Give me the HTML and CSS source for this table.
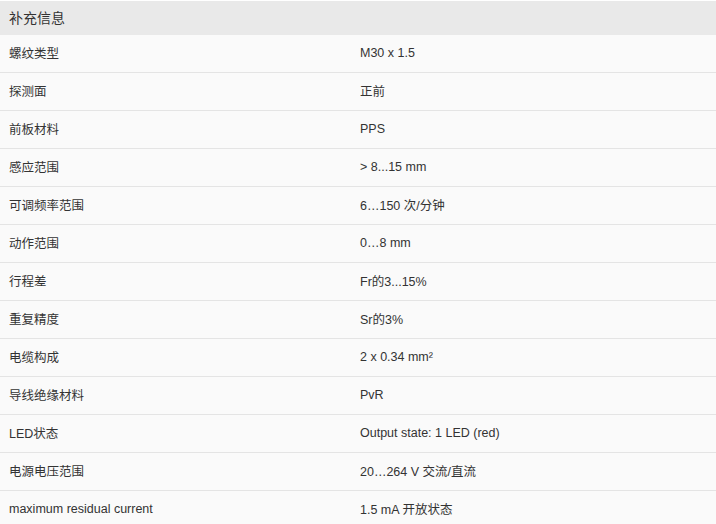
FILE: index.html
```html
<!DOCTYPE html>
<html lang="zh">
<head>
<meta charset="utf-8">
<link rel="stylesheet" href="styles.css">
</head>
<body>
<div class="spec">
  <div class="spec-head">补充信息</div>
  <div class="spec-row"><div class="k">螺纹类型</div><div class="v">M30 x 1.5</div></div>
  <div class="spec-row"><div class="k">探测面</div><div class="v">正前</div></div>
  <div class="spec-row"><div class="k">前板材料</div><div class="v">PPS</div></div>
  <div class="spec-row"><div class="k">感应范围</div><div class="v">&gt; 8...15 mm</div></div>
  <div class="spec-row"><div class="k">可调频率范围</div><div class="v">6…150 次/分钟</div></div>
  <div class="spec-row"><div class="k">动作范围</div><div class="v">0…8 mm</div></div>
  <div class="spec-row"><div class="k">行程差</div><div class="v">Fr的3...15%</div></div>
  <div class="spec-row"><div class="k">重复精度</div><div class="v">Sr的3%</div></div>
  <div class="spec-row"><div class="k">电缆构成</div><div class="v">2 x 0.34 mm²</div></div>
  <div class="spec-row"><div class="k">导线绝缘材料</div><div class="v">PvR</div></div>
  <div class="spec-row"><div class="k">LED状态</div><div class="v">Output state: 1 LED (red)</div></div>
  <div class="spec-row"><div class="k">电源电压范围</div><div class="v">20…264 V 交流/直流</div></div>
  <div class="spec-row"><div class="k">maximum residual current</div><div class="v">1.5 mA 开放状态</div></div>
</div>
</body>
</html>
```
FILE: styles.css
```css
html, body {
  margin: 0;
  padding: 0;
  background: #ffffff;
}
body {
  font-family: "Liberation Sans", Arial, "Noto Sans CJK SC", sans-serif;
  font-size: 12.5px;
  color: #333333;
}
.spec {
  padding-top: 1px;
}
.spec-head {
  background: #e9e9e9;
  height: 34px;
  line-height: 34px;
  padding-left: 9px;
  font-size: 14px;
}
.spec-row {
  display: grid;
  grid-template-columns: 351px 1fr;
  box-sizing: border-box;
  height: 38px;
  padding-bottom: 2px;
  align-items: center;
  background: #fafafa;
  border-bottom: 1px solid #e4e4e4;
}
.k, .v {
  padding-left: 9px;
}
```
